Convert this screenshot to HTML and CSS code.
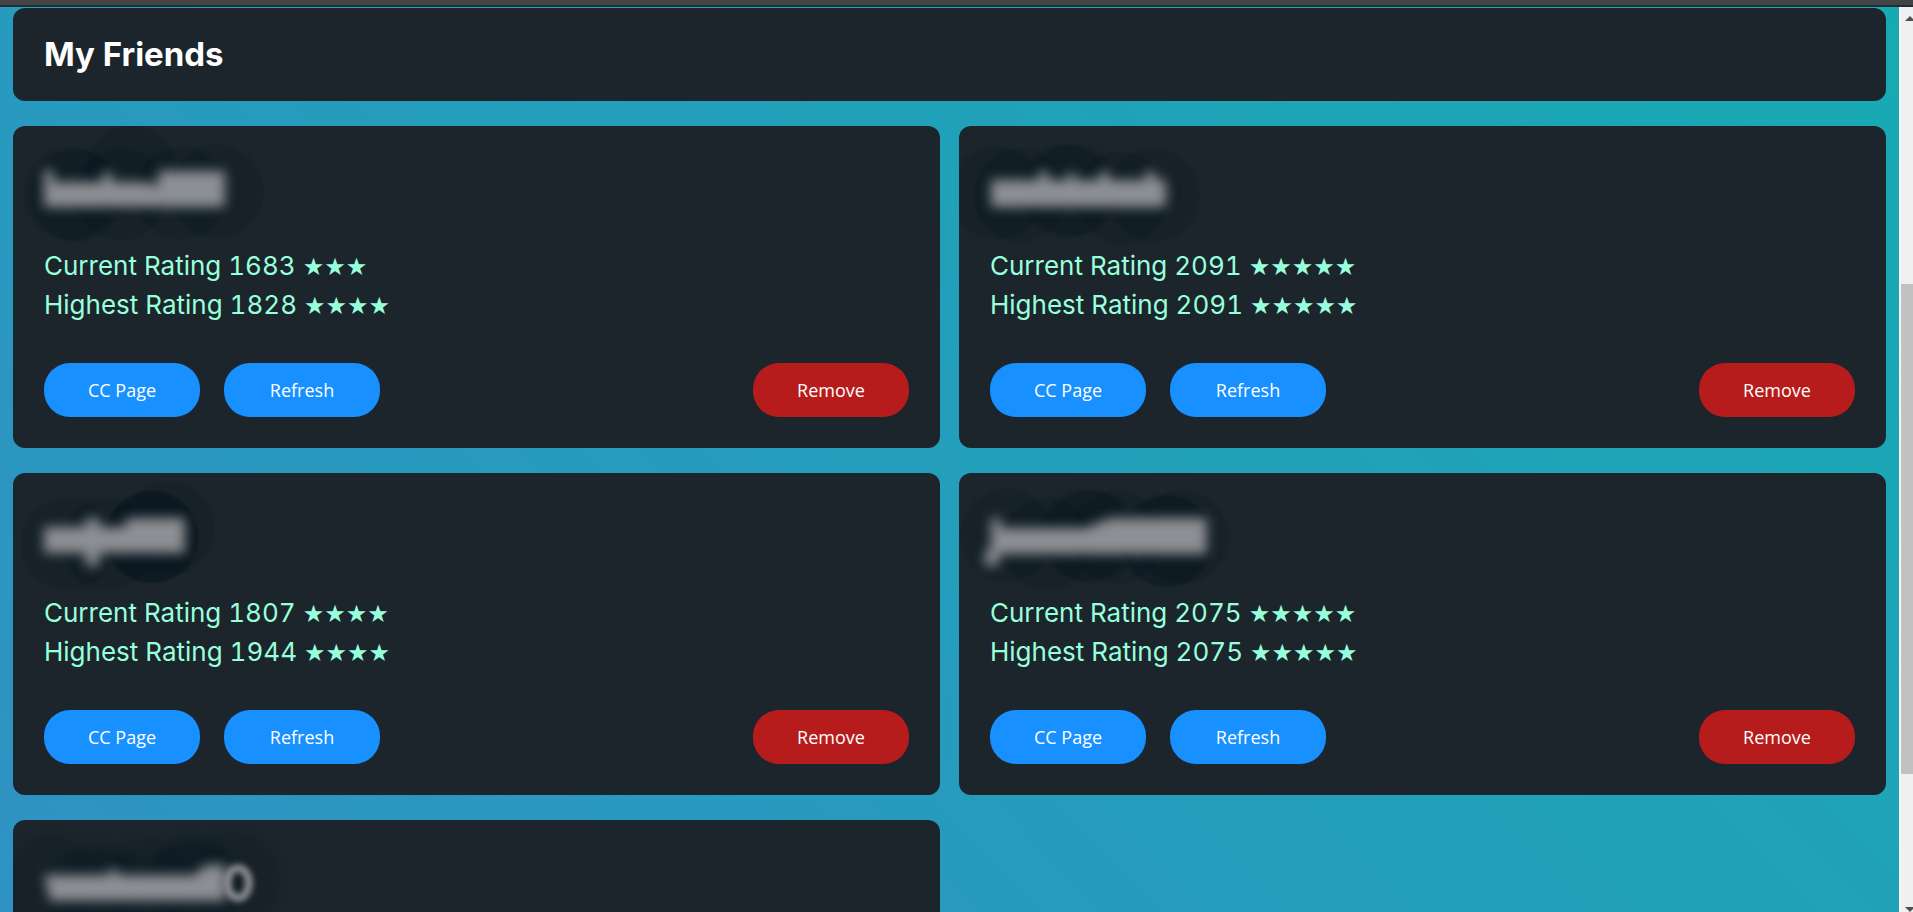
FILE: index.html
```html
<!DOCTYPE html>
<html lang="en">
<head>
<meta charset="utf-8">
<title>My Friends</title>
<link rel="stylesheet" href="styles.css">
</head>
<body>
<div class="topbar"></div>
<div class="viewport">
  <main class="page">
    <header class="panel"><h1 class="title">My Friends</h1></header>
    <section class="grid">
      <article class="card">
        <h2 class="name" aria-label="Hidden name">
          <svg class="smear" width="240" height="64" aria-hidden="true">
            <g class="halo"><circle cx="33" cy="38" r="46"/><circle cx="27" cy="37" r="46"/><circle cx="87" cy="15" r="46"/><circle cx="76" cy="37" r="46"/><circle cx="136" cy="36" r="46"/><circle cx="173" cy="34" r="46"/></g>
            <g class="ink"><rect x="0" y="13" width="9" height="37"/><rect x="6" y="25" width="100" height="25"/><rect x="59" y="15" width="9" height="20"/><rect x="92" y="28" width="22" height="22"/><rect x="114" y="14" width="67" height="36"/></g>
          </svg>
        </h2>
        <p class="ratings">Current Rating 1683 <span class="stars">★★★</span><br>Highest Rating 1828 <span class="stars">★★★★</span></p>
        <div class="actions"><button class="btn">CC Page</button><button class="btn">Refresh</button><button class="btn btn-remove">Remove</button></div>
      </article>
      <article class="card">
        <h2 class="name" aria-label="Hidden name">
          <svg class="smear" width="240" height="64" aria-hidden="true">
            <g class="halo"><circle cx="7" cy="36" r="46"/><circle cx="30" cy="38" r="46"/><circle cx="83" cy="33" r="46"/><circle cx="76" cy="34" r="46"/><circle cx="132" cy="41" r="46"/><circle cx="163" cy="38" r="46"/></g>
            <g class="ink"><rect x="1" y="23" width="175" height="27"/><rect x="49" y="14" width="9" height="24"/><rect x="78" y="16" width="7" height="18"/><rect x="110" y="14" width="9" height="24"/><rect x="156" y="14" width="9" height="24"/></g>
          </svg>
        </h2>
        <p class="ratings">Current Rating 2091 <span class="stars">★★★★★</span><br>Highest Rating 2091 <span class="stars">★★★★★</span></p>
        <div class="actions"><button class="btn">CC Page</button><button class="btn">Refresh</button><button class="btn btn-remove">Remove</button></div>
      </article>
      <article class="card">
        <h2 class="name" aria-label="Hidden name">
          <svg class="smear" width="240" height="64" aria-hidden="true">
            <g class="halo"><circle cx="24" cy="40" r="46"/><circle cx="64" cy="40" r="46"/><circle cx="108" cy="33" r="46"/><circle cx="108" cy="33" r="46"/><circle cx="108" cy="33" r="46"/><circle cx="124" cy="25" r="46"/></g>
            <g class="ink"><rect x="0" y="23" width="84" height="26"/><rect x="42" y="14" width="13" height="48"/><rect x="82" y="14" width="59" height="35"/></g>
          </svg>
        </h2>
        <p class="ratings">Current Rating 1807 <span class="stars">★★★★</span><br>Highest Rating 1944 <span class="stars">★★★★</span></p>
        <div class="actions"><button class="btn">CC Page</button><button class="btn">Refresh</button><button class="btn btn-remove">Remove</button></div>
      </article>
      <article class="card">
        <h2 class="name" aria-label="Hidden name">
          <svg class="smear" width="240" height="64" aria-hidden="true">
            <g class="halo"><circle cx="17" cy="31" r="46"/><circle cx="57" cy="40" r="46"/><circle cx="95" cy="31" r="46"/><circle cx="102" cy="32" r="46"/><circle cx="127" cy="33" r="46"/><circle cx="178" cy="37" r="46"/><circle cx="176" cy="37" r="46"/><circle cx="192" cy="33" r="46"/></g>
            <g class="ink"><rect x="1" y="14" width="9" height="38"/><rect x="-5" y="46" width="13" height="16"/><rect x="7" y="24" width="110" height="26"/><path d="M96 24 120 14h97v36H96z"/></g>
          </svg>
        </h2>
        <p class="ratings">Current Rating 2075 <span class="stars">★★★★★</span><br>Highest Rating 2075 <span class="stars">★★★★★</span></p>
        <div class="actions"><button class="btn">CC Page</button><button class="btn">Refresh</button><button class="btn btn-remove">Remove</button></div>
      </article>
      <article class="card">
        <h2 class="name" aria-label="Hidden name">
          <svg class="smear" width="240" height="64" aria-hidden="true">
            <g class="halo soft"><circle cx="6" cy="32" r="46"/><circle cx="48" cy="40" r="46"/><circle cx="63" cy="41" r="46"/><circle cx="105" cy="34" r="46"/><circle cx="146" cy="32" r="46"/><circle cx="150" cy="33" r="46"/><circle cx="189" cy="29" r="46"/></g>
            <g class="ink"><path d="M0 24h64l4-8 8 8h74l12-10h20v36H6z"/></g>
            <ellipse class="ring" cx="194" cy="32" rx="11" ry="15"/>
          </svg>
        </h2>
      </article>
    </section>
  </main>
  <div class="scrollbar" aria-hidden="true">
    <svg class="arrow" width="14" height="14" viewBox="0 0 14 14"><path d="M4 12 9 7l5 5z"/></svg>
    <div class="track"><div class="thumb"></div></div>
    <svg class="arrow" width="14" height="14" viewBox="0 0 14 14"><path d="M4 9h10l-5 5z"/></svg>
  </div>
</div>
</body>
</html>
```
FILE: styles.css
```css
* { box-sizing: border-box; }

body {
  margin: 0;
  height: 100vh;
  display: flex;
  flex-direction: column;
  overflow: hidden;
  font-family: Inter, "Liberation Sans", sans-serif;
}

.topbar {
  flex: none;
  height: 7px;
  background: #444;
  border-bottom: 2px solid #1d2f38;
}

.viewport {
  flex: 1;
  min-height: 0;
  display: flex;
  background: #fff;
}

.page {
  flex: 1;
  overflow: hidden;
  padding: 1px 13px 0;
  background: linear-gradient(45deg, #2f92c3, #18aab3);
}

.panel,
.card {
  background: #1b252b;
  border-radius: 12px;
}

.panel {
  height: 93px;
  padding: 0 31px 2px;
  display: flex;
  align-items: center;
}

.title {
  margin: 0;
  color: #fff;
  font-size: 33px;
  line-height: 40px;
  font-weight: 700;
}

.grid {
  display: grid;
  grid-template-columns: 1fr 1fr;
  grid-auto-rows: 322px;
  gap: 25px 19px;
  margin-top: 25px;
}

.card {
  padding: 31px;
  overflow: hidden;
}

.name {
  margin: 0 0 25px;
  height: 64px;
}

.smear {
  display: block;
  overflow: visible;
}

.halo {
  fill: #00101a;
  fill-opacity: 0.18;
  filter: blur(1px);
}

.halo.soft { filter: blur(5px); }

.ink {
  fill: #8c8f93;
  filter: blur(6px);
}

.ring {
  fill: none;
  stroke: #94979b;
  stroke-width: 7px;
  filter: blur(3px);
}

.ratings {
  margin: 0 0 39px;
  color: #98ffdc;
  font-size: 26px;
  line-height: 39px;
  font-variant-numeric: tabular-nums;
}

.stars {
  font-family: "DejaVu Sans", sans-serif;
  font-size: 24px;
  line-height: 1;
}

.actions {
  display: flex;
  gap: 24px;
}

.btn {
  width: 156px;
  height: 54px;
  padding: 0;
  border: 0;
  border-radius: 26px;
  background: #1890ff;
  color: #fff;
  font-family: "Open Sans", "Noto Sans", sans-serif;
  font-size: 18px;
}

.btn-remove {
  margin-left: auto;
  background: #b71c1c;
}

.scrollbar {
  flex: none;
  width: 14px;
  display: flex;
  flex-direction: column;
  padding-top: 2px;
  background: #f0f0f0;
  border-left: 2px solid #f7f7f7;
}

.arrow {
  flex: none;
  fill: #505050;
}

.track {
  flex: 1;
  display: flex;
  flex-direction: column;
}

.track::before {
  content: "";
  flex: 261;
}

.track::after {
  content: "";
  flex: 124;
}

.thumb {
  flex: 490;
  background: #c1c1c1;
}
```
